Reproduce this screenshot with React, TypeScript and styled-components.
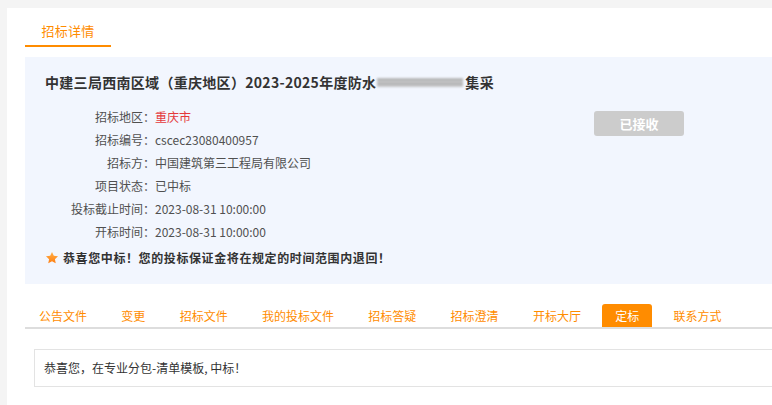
import React from "react";
import styled, { createGlobalStyle } from "styled-components";

const Global = createGlobalStyle`
  html, body { margin: 0; padding: 0; }
  body {
    background: #f4f4f4;
    overflow: hidden;
    font-family: "Noto Sans CJK SC", "Microsoft YaHei", sans-serif;
    color: #333;
  }
`;

const Card = styled.div`
  margin: 8px 0 0 7px;
  width: 1400px;
  min-height: 420px;
  background: #fff;
  padding: 0 0 0 18px;
  box-sizing: border-box;
`;

const HeaderTab = styled.div`
  display: inline-block;
  padding: 9px 0 0;
  width: 86px;
  text-align: center;
  font-size: 13px;
  line-height: 28px;
  color: #ff8c00;
  border-bottom: 2px solid #ff8c00;
  letter-spacing: 0.2px;
`;

const Panel = styled.div`
  margin-top: 10px;
  background: #f2f6fe;
  padding: 15px 20px 15px;
`;

const Title = styled.div`
  font-size: 14px;
  font-weight: bold;
  line-height: 20px;
  color: #333;
  display: flex;
  align-items: center;
  letter-spacing: 0.3px;
`;

const Redacted = styled.span`
  display: inline-block;
  width: 86px;
  height: 9px;
  margin: 0 2px 0 1px;
  background: repeating-linear-gradient(
    180deg,
    #c4c4c4 0px,
    #9a9a9a 2px,
    #d6d6d6 4px
  );
  filter: blur(1.2px);
  opacity: 0.85;
`;

const InfoArea = styled.div`
  display: flex;
  margin-top: 13px;
`;

const InfoList = styled.div`
  width: 549px;
  display: flex;
  flex-direction: column;
`;

const Row = styled.div`
  display: flex;
  font-size: 12px;
  line-height: 23px;
  color: #505050;
`;

const Label = styled.span`
  width: 110px;
  text-align: right;
  flex-shrink: 0;
`;

const Value = styled.span<{ $red?: boolean }>`
  color: ${(p) => (p.$red ? "#e4393c" : "#505050")};
`;

const StatusButton = styled.div`
  margin-top: 6px;
  width: 90px;
  height: 25px;
  border-radius: 3px;
  background: #cccccc;
  color: #fff;
  font-size: 13px;
  font-weight: bold;
  line-height: 25px;
  text-align: center;
`;

const Notice = styled.div`
  margin-top: 3px;
  display: flex;
  align-items: center;
  gap: 4px;
  font-size: 12px;
  font-weight: bold;
  line-height: 23px;
  color: #333;
  letter-spacing: 0.6px;
`;

const TabBar = styled.div`
  margin-top: 20px;
  display: flex;
  gap: 8.3px;
  padding-left: 1px;
  border-bottom: 2px solid #dddddd;
`;

const Tab = styled.div<{ $active?: boolean }>`
  padding: 0 13px;
  height: 23px;
  line-height: 23px;
  font-size: 12px;
  border-radius: 3px 3px 0 0;
  color: ${(p) => (p.$active ? "#fff" : "#ff8c00")};
  background: ${(p) => (p.$active ? "#ff8c00" : "transparent")};
  margin-bottom: ${(p) => (p.$active ? "-1px" : "0")};
`;

const ContentBox = styled.div`
  margin: 20px 0 0 9px;
  border: 1px solid #e3e3e3;
  height: 36px;
  line-height: 36px;
  padding-left: 9px;
  font-size: 12px;
  color: #333;
`;

const Star = () => (
  <svg width="14" height="14" viewBox="0 0 24 24">
    <defs>
      <linearGradient id="sg" x1="0" y1="0" x2="0" y2="1">
        <stop offset="0" stopColor="#ffb24a" />
        <stop offset="1" stopColor="#ff7d10" />
      </linearGradient>
    </defs>
    <path
      d="M12 1.5l3.1 6.6 7.2.9-5.3 5 1.4 7.1L12 17.6l-6.4 3.5 1.4-7.1-5.3-5 7.2-.9z"
      fill="url(#sg)"
    />
  </svg>
);

const rows: { label: string; value: string; red?: boolean }[] = [
  { label: "招标地区：", value: "重庆市", red: true },
  { label: "招标编号：", value: "cscec23080400957" },
  { label: "招标方：", value: "中国建筑第三工程局有限公司" },
  { label: "项目状态：", value: "已中标" },
  { label: "投标截止时间：", value: "2023-08-31 10:00:00" },
  { label: "开标时间：", value: "2023-08-31 10:00:00" },
];

const tabs = [
  "公告文件",
  "变更",
  "招标文件",
  "我的投标文件",
  "招标答疑",
  "招标澄清",
  "开标大厅",
  "定标",
  "联系方式",
];

export default function App() {
  return (
    <>
      <Global />
      <Card>
        <HeaderTab>招标详情</HeaderTab>
        <Panel>
          <Title>
            中建三局西南区域（重庆地区）2023-2025年度防水
            <Redacted />
            集采
          </Title>
          <InfoArea>
            <InfoList>
              {rows.map((r) => (
                <Row key={r.label}>
                  <Label>{r.label}</Label>
                  <Value $red={r.red}>{r.value}</Value>
                </Row>
              ))}
            </InfoList>
            <StatusButton>已接收</StatusButton>
          </InfoArea>
          <Notice>
            <Star />
            恭喜您中标！您的投标保证金将在规定的时间范围内退回！
          </Notice>
        </Panel>
        <TabBar>
          {tabs.map((t) => (
            <Tab key={t} $active={t === "定标"}>
              {t}
            </Tab>
          ))}
        </TabBar>
        <ContentBox>恭喜您，在专业分包-清单模板, 中标！</ContentBox>
      </Card>
    </>
  );
}
